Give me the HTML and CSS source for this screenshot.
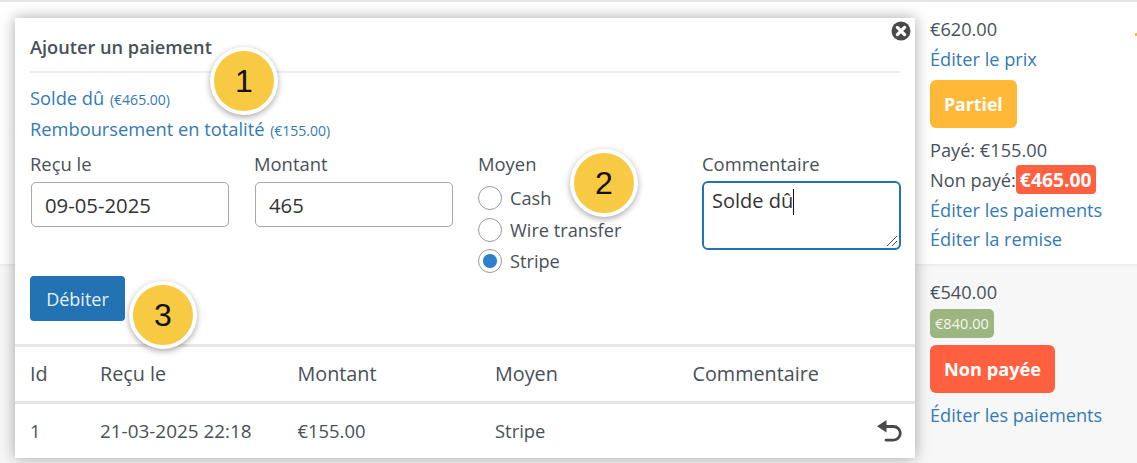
FILE: index.html
```html
<!DOCTYPE html>
<html lang="fr">
<head>
<meta charset="utf-8">
<title>Ajouter un paiement</title>
<link rel="stylesheet" href="styles.css">
</head>
<body>
<main class="orders">
  <section class="order">
    <div class="order-info">
      <div class="line">€620.00</div>
      <a class="line link" href="#">Éditer le prix</a>
      <span class="status status-partial">Partiel</span>
      <div class="line">Payé: €155.00</div>
      <div class="line">Non payé:<span class="due">€465.00</span></div>
      <a class="line link" href="#">Éditer les paiements</a>
      <a class="line link" href="#">Éditer la remise</a>
    </div>
    <span class="mark"></span>
  </section>
  <section class="order order-alt">
    <div class="order-info">
      <div class="line">€540.00</div>
      <span class="old-price">€840.00</span>
      <span class="status status-unpaid">Non payée</span>
      <a class="line link" href="#">Éditer les paiements</a>
    </div>
  </section>
</main>

<div class="modal">
  <button class="close" type="button" aria-label="Fermer">
    <svg viewBox="0 0 20 20" width="20" height="20"><circle cx="10" cy="10" r="9.5" fill="#4a4a4a"/><path d="M6.4 6.4l7.2 7.2M13.6 6.4l-7.2 7.2" stroke="#fff" stroke-width="3.2" stroke-linecap="round"/></svg>
  </button>
  <div class="modal-body">
    <h2 class="modal-title">Ajouter un paiement</h2>
    <a class="quick" href="#">Solde dû <small>(€465.00)</small></a>
    <a class="quick" href="#">Remboursement en totalité <small>(€155.00)</small></a>
    <form class="pay-form">
      <div class="field">
        <label class="field-label">Reçu le</label>
        <div class="input">09-05-2025</div>
      </div>
      <div class="field">
        <label class="field-label">Montant</label>
        <div class="input">465</div>
      </div>
      <div class="field">
        <span class="field-label">Moyen</span>
        <div class="radios">
          <div class="radio"><span class="dot"></span>Cash</div>
          <div class="radio"><span class="dot"></span>Wire transfer</div>
          <div class="radio"><span class="dot dot-on"></span>Stripe</div>
        </div>
      </div>
      <div class="field">
        <label class="field-label">Commentaire</label>
        <div class="textarea">Solde dû<span class="caret"></span>
          <svg class="grip" viewBox="0 0 12 12" width="12" height="12"><path d="M1 11L11 1M6 11l5-5" stroke="#555" stroke-width="1" fill="none"/></svg>
        </div>
      </div>
    </form>
    <button class="submit" type="button">Débiter</button>
  </div>
  <table class="history">
    <thead>
      <tr><th class="c-id">Id</th><th class="c-col">Reçu le</th><th class="c-col">Montant</th><th class="c-col">Moyen</th><th>Commentaire</th></tr>
    </thead>
    <tbody>
      <tr>
        <td>1</td><td class="c-date">21-03-2025 22:18</td><td>€155.00</td><td>Stripe</td>
        <td class="c-action">
          <svg viewBox="0 0 25 22" width="25" height="22"><path d="M9.500 0L0 6.300l9.500 6.200z" fill="#4a4a4a"/><path d="M8 6.500h8.500a6.800 6.800 0 0 1 0 13.600H9" fill="none" stroke="#4a4a4a" stroke-width="2.800" stroke-linecap="round"/></svg>
        </td>
      </tr>
    </tbody>
  </table>
</div>

<span class="step step-1">1</span>
<span class="step step-2">2</span>
<span class="step step-3">3</span>
</body>
</html>
```
FILE: styles.css
```css
* { box-sizing: border-box; }
html, body { margin: 0; height: 100%; }
body {
  width: 1137px;
  height: 463px;
  overflow: hidden;
  position: relative;
  background: #fff;
  color: #495057;
  font-family: "Open Sans", "Noto Sans", sans-serif;
  font-size: 18.200px;
  line-height: 30px;
}
a { color: #337ab7; text-decoration: none; }

.orders { border-top: 2px solid #e6e6e6; height: 100%; display: flex; flex-direction: column; }
.order { height: 262px; padding-left: 930px; padding-top: 12px; position: relative; }
.order-alt { flex: 1; height: auto; background: #f7f7f7; border-top: 2px solid #eee; padding-top: 11px; }
.order-info { display: flex; flex-direction: column; align-items: flex-start; }
.line { display: block; height: 29.700px; white-space: nowrap; }
.status {
  display: block;
  margin: 7px 0 7px;
  padding: 0 14px;
  height: 48px;
  line-height: 48px;
  border-radius: 6px;
  color: #fff;
  font-weight: 700;
  font-size: 17.700px;
}
.status-partial { background: #ffb838; }
.status-unpaid { background: #ff6040; font-size: 18.200px; }
.due {
  display: inline-block;
  background: #ff6040;
  color: #fff;
  font-weight: 700;
  font-size: 19.300px;
  height: 29px;
  line-height: 29px;
  padding: 0 4px;
  border-radius: 4px;
  vertical-align: top;
}
.old-price {
  display: block;
  margin-top: 2px;
  height: 29px;
  line-height: 29px;
  padding: 0 5px;
  background: #9db580;
  border-radius: 5px;
  color: #f4f7ee;
  font-size: 14.600px;
}
.mark {
  position: absolute;
  top: 31px;
  right: 0;
  width: 2px;
  height: 3px;
  background: #ffb838;
}

.modal {
  position: absolute;
  left: 15px;
  top: 18px;
  width: 900px;
  height: 440px;
  background: #fff;
  box-shadow: 0 0 14px rgba(0, 0, 0, .35);
}
.close {
  position: absolute;
  top: 3px;
  right: 4px;
  padding: 0;
  border: 0;
  background: none;
  width: 20px;
  height: 20px;
}
.close svg { display: block; }
.modal-body { padding: 14px 15px 0; height: 326px; }
.modal-title {
  margin: 0;
  height: 41px;
  line-height: 30px;
  font-size: 18.200px;
  font-weight: 600;
  border-bottom: 2px solid #eee;
}
.quick { display: block; height: 31px; line-height: 30px; font-size: 18.300px; white-space: nowrap; }
.modal-title + .quick { margin-top: 10px; }
.quick small { font-size: 14px; margin-left: 1px; }

.pay-form {
  display: grid;
  grid-template-columns: repeat(4, 198px);
  column-gap: 26px;
  margin-top: 4px;
  height: 127px;
}
.field { display: flex; flex-direction: column; align-items: flex-start; }
.field-label { display: block; height: 32px; line-height: 30px; font-size: 18.400px; }
.input {
  width: 198px;
  height: 45px;
  margin: 1px 0 0 1px;
  padding: 0 13px;
  line-height: 45px;
  border: 1px solid #a9a9a9;
  border-radius: 5px;
  color: #333;
  font-size: 20.300px;
}
.radios { display: flex; flex-direction: column; margin-top: 1px; }
.radio { display: flex; align-items: center; height: 31.700px; font-size: 18.200px; white-space: nowrap; }
.dot {
  width: 24px;
  height: 24px;
  margin-right: 8px;
  border: 1px solid #9a9a9a;
  border-radius: 50%;
  background: #fff;
}
.dot-on { background: radial-gradient(circle, #2f7fcc 0 6.500px, #fff 7.500px); }
.textarea {
  position: relative;
  width: 199px;
  height: 69px;
  padding: 3px 8px;
  border: 2px solid #2272b4;
  border-radius: 6px;
  color: #333;
  font-size: 20px;
  line-height: 30px;
}
.caret { display: inline-block; width: 1px; height: 26px; background: #111; vertical-align: -7px; }
.grip { position: absolute; right: 1px; bottom: 1px; }
.submit {
  display: block;
  width: 95px;
  height: 45px;
  padding: 0;
  border: 0;
  border-radius: 4px;
  background: #2272b4;
  color: #e8f0f7;
  font: 400 18px "Open Sans", "Noto Sans", sans-serif;
}

.history { width: 900px; border-collapse: collapse; table-layout: fixed; }
.history th, .history td {
  padding: 0 0 0 15px;
  text-align: left;
  font-size: 18.400px;
  font-weight: 400;
}
.history th { font-size: 19.800px; }
.history thead tr { height: 57px; border-top: 3px solid #e6e6e6; border-bottom: 3px solid #e6e6e6; }
.history tbody tr { height: 55px; }
.c-id { width: 70px; }
.c-col { width: 197.500px; }
.history td.c-date { font-size: 18.900px; }
.history td.c-action { text-align: right; padding-right: 13px; }
.c-action svg { display: inline-block; vertical-align: middle; margin-bottom: 4px; }

.step {
  position: absolute;
  width: 68px;
  height: 68px;
  border: 4px solid #fff;
  border-radius: 50%;
  background: #f8c942;
  box-shadow: 0 2px 6px rgba(0, 0, 0, .35);
  color: #111;
  font-family: "Liberation Sans", sans-serif;
  font-size: 32px;
  line-height: 60px;
  text-align: center;
}
.step-1 { left: 210px; top: 47px; }
.step-2 { left: 570px; top: 149px; }
.step-3 { left: 129px; top: 281px; }
```
